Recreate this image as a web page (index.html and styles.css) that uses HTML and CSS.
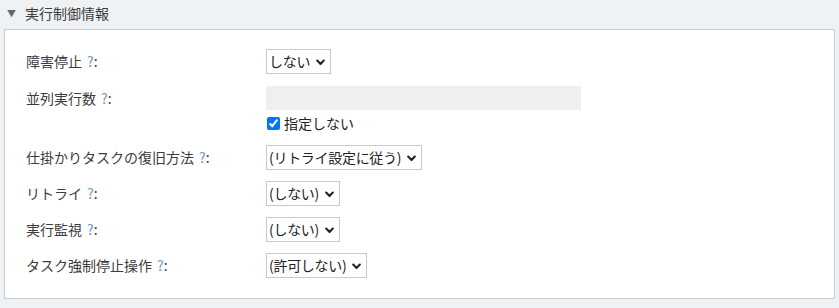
FILE: index.html
```html
<!DOCTYPE html>
<html lang="ja">
<head>
<meta charset="utf-8">
<title>実行制御情報</title>
<link rel="stylesheet" href="styles.css">
</head>
<body>
<div class="section">
  <div class="section-head">
    <span class="toggle">▼</span>
    <span class="title">実行制御情報</span>
  </div>
  <div class="panel">
    <div class="row">
      <div class="label">障害停止<span class="help">?</span>:</div>
      <div class="field">
        <span class="select"><span class="val">しない</span><svg class="chev" width="9" height="7" viewBox="0 0 9 7"><path d="M1.2 1.6 L4.5 4.9 L7.8 1.6" fill="none" stroke="#222" stroke-width="2.1" stroke-linecap="round" stroke-linejoin="round"/></svg></span>
      </div>
    </div>
    <div class="row row-multi">
      <div class="label">並列実行数<span class="help">?</span>:</div>
      <div class="field field-col">
        <span class="textbox"></span>
        <label class="check"><input type="checkbox" checked><span>指定しない</span></label>
      </div>
    </div>
    <div class="row">
      <div class="label">仕掛かりタスクの復旧方法<span class="help">?</span>:</div>
      <div class="field">
        <span class="select"><span class="val">(リトライ設定に従う)</span><svg class="chev" width="9" height="7" viewBox="0 0 9 7"><path d="M1.2 1.6 L4.5 4.9 L7.8 1.6" fill="none" stroke="#222" stroke-width="2.1" stroke-linecap="round" stroke-linejoin="round"/></svg></span>
      </div>
    </div>
    <div class="row">
      <div class="label">リトライ<span class="help">?</span>:</div>
      <div class="field">
        <span class="select"><span class="val">(しない)</span><svg class="chev" width="9" height="7" viewBox="0 0 9 7"><path d="M1.2 1.6 L4.5 4.9 L7.8 1.6" fill="none" stroke="#222" stroke-width="2.1" stroke-linecap="round" stroke-linejoin="round"/></svg></span>
      </div>
    </div>
    <div class="row">
      <div class="label">実行監視<span class="help">?</span>:</div>
      <div class="field">
        <span class="select"><span class="val">(しない)</span><svg class="chev" width="9" height="7" viewBox="0 0 9 7"><path d="M1.2 1.6 L4.5 4.9 L7.8 1.6" fill="none" stroke="#222" stroke-width="2.1" stroke-linecap="round" stroke-linejoin="round"/></svg></span>
      </div>
    </div>
    <div class="row">
      <div class="label">タスク強制停止操作<span class="help">?</span>:</div>
      <div class="field">
        <span class="select"><span class="val">(許可しない)</span><svg class="chev" width="9" height="7" viewBox="0 0 9 7"><path d="M1.2 1.6 L4.5 4.9 L7.8 1.6" fill="none" stroke="#222" stroke-width="2.1" stroke-linecap="round" stroke-linejoin="round"/></svg></span>
      </div>
    </div>
  </div>
</div>
</body>
</html>
```
FILE: styles.css
```css
html, body {
  margin: 0;
  padding: 0;
  background: #eff2f5;
}
body {
  font-family: "Noto Sans CJK JP", "Noto Sans", sans-serif;
  font-size: 14px;
  color: #3c3c3c;
  height: 308px;
  overflow: hidden;
}
.section {
  padding: 0 4px;
}
.section-head {
  height: 29px;
  display: flex;
  align-items: center;
  padding-left: 3px;
}
.toggle {
  font-size: 9px;
  color: #666;
  width: 18px;
  line-height: 1;
  margin-top: -2px;
}
.title {
  font-size: 14px;
  line-height: 1;
  margin-top: -3px;
}
.panel {
  width: 831px;
  box-sizing: border-box;
  background: #fff;
  border: 1px solid #c9cdd1;
  padding: 19px 0 20px 21px;
  display: flex;
  flex-direction: column;
  gap: 11px;
}
.row {
  display: grid;
  grid-template-columns: 240px auto;
  align-items: start;
}
.row:first-child,
.row-multi {
  margin-bottom: 1px;
}
.label {
  line-height: 25px;
  height: 25px;
  white-space: nowrap;
}
.help {
  color: #6c98c4;
  margin-left: 5px;
}
.field {
  display: flex;
}
.field-col {
  flex-direction: column;
  align-items: flex-start;
}
.select {
  display: inline-flex;
  align-items: center;
  height: 25px;
  box-sizing: border-box;
  border: 1px solid #c8c8c8;
  background: #fff;
  padding: 0 5px 0 2px;
  color: #222;
  white-space: nowrap;
}
.val {
  line-height: 23px;
  letter-spacing: -0.3px;
}
.chev {
  display: block;
  flex: none;
  margin-left: 6px;
  margin-top: 1px;
}
.textbox {
  display: block;
  width: 315px;
  height: 24px;
  background: #efefef;
}
.check {
  display: flex;
  align-items: center;
  height: 20px;
  margin-top: 3px;
  color: #222;
}
.check input {
  width: 13px;
  height: 13px;
  margin: 0 4px 0 1px;
  accent-color: #0075ff;
}
```
